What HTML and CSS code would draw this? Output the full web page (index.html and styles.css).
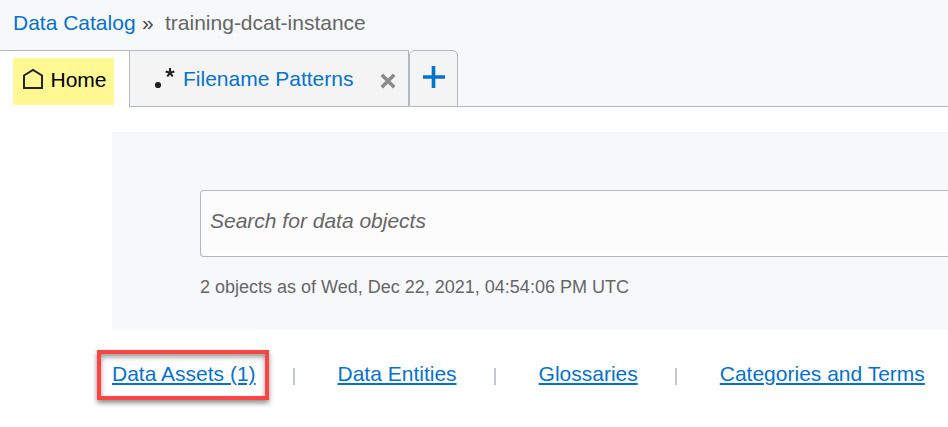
FILE: index.html
```html
<!DOCTYPE html>
<html lang="en">
<head>
<meta charset="utf-8">
<title>Data Catalog</title>
<link rel="stylesheet" href="styles.css">
</head>
<body>
<header class="crumbs">
  <a class="crumb-link" href="#">Data Catalog</a>
  <span class="crumb-sep">»</span>
  <span class="crumb-current">training-dcat-instance</span>
</header>
<nav class="tabs">
  <div class="tab-home">
    <div class="home-mark">
      <svg class="home-icon" width="22" height="22" viewBox="0 0 22 22"><path d="M2 7.5 L11 2 L20 7.5 V20 H2 Z" fill="none" stroke="#222" stroke-width="2"/></svg>
      <span>Home</span>
    </div>
  </div>
  <div class="tab-patterns">
    <svg class="pattern-icon" width="22" height="24" viewBox="0 0 22 24"><circle cx="4" cy="19" r="3.1" fill="#222"/><path d="M16 2 V6.8 M16 6.8 L11.7 5.4 M16 6.8 L20.3 5.4 M16 6.8 L13.3 10.5 M16 6.8 L18.7 10.5" fill="none" stroke="#222" stroke-width="2.1"/></svg>
    <a class="tab-label" href="#">Filename Patterns</a>
    <svg class="close-icon" width="16" height="16" viewBox="0 0 16 16"><path d="M1.8 1.8 L14.2 14.2 M14.2 1.8 L1.8 14.2" stroke="#8b8b8b" stroke-width="3.6"/></svg>
  </div>
  <div class="tab-add">
    <svg width="22" height="22" viewBox="0 0 22 22"><path d="M10.5 0 V22 M0 11 H22" stroke="#0572ce" stroke-width="3.6"/></svg>
  </div>
  <div class="tab-rest"></div>
</nav>
<main>
  <section class="search-panel">
    <div class="search-box"><div class="search-text">Search for data objects</div></div>
    <p class="summary">2 objects as of Wed, Dec 22, 2021, 04:54:06 PM UTC</p>
  </section>
  <nav class="links">
    <div class="callout"><a class="link assets" href="#">Data Assets (1)</a></div>
    <span class="divider"></span>
    <a class="link entities" href="#">Data Entities</a>
    <span class="divider"></span>
    <a class="link glossaries" href="#">Glossaries</a>
    <span class="divider"></span>
    <a class="link terms" href="#">Categories and Terms</a>
  </nav>
</main>
</body>
</html>
```
FILE: styles.css
```css
* { box-sizing: border-box; }
body {
  margin: 0;
  width: 948px;
  height: 427px;
  overflow: hidden;
  background: #fff;
  font: 21px/24px "Liberation Sans", Arial, sans-serif;
  color: #666;
}
a { color: #0572ce; text-decoration: none; }
.crumbs {
  display: flex;
  height: 50px;
  padding: 11px 0 0 13px;
  background: #f6f8fa;
  white-space: nowrap;
}
.crumb-link { width: 129px; }
.crumb-sep { width: 23px; color: #444; }
.tabs { display: flex; height: 57px; }
.tab-home {
  width: 129px;
  padding: 7px 0 0 13px;
  border-top: 1px solid #b0b8c2;
}
.home-mark {
  display: flex;
  align-items: center;
  width: 101px;
  height: 47px;
  padding-left: 9px;
  gap: 6.5px;
  background: #fff893;
  color: #000;
}
.home-icon { margin-top: -5px; }
.home-mark span { margin-top: -3px; }
.tab-patterns {
  display: flex;
  width: 280px;
  padding: 15px 0 0 24px;
  border: 1px solid #b0b8c2;
  background: #f4f4f4;
  white-space: nowrap;
}
.tab-label { width: 197px; margin: 1px 0 0 7px; }
.close-icon { margin-top: 7px; }
.tab-add {
  width: 49px;
  padding: 15px 0 0 13px;
  border: 1px solid #b0b8c2;
  border-radius: 5px 5px 0 0;
  background: #f4f4f4;
}
.tab-add svg { display: block; }
.tab-rest { flex: 1; background: #f6f8fa; border-bottom: 1px solid #b0b8c2; }
.search-panel {
  height: 198px;
  margin: 25px 0 0 112px;
  padding: 58px 0 0 88px;
  background: #f6f8fa;
}
.search-box {
  height: 67px;
  padding-bottom: 5px;
  border: 1px solid #b0b8c2;
  border-right: 0;
  border-radius: 4px 0 0 4px;
  background: #fff;
}
.search-text {
  height: 60px;
  padding: 18px 0 0 9px;
  border-radius: 4px 0 0 0;
  background: #fcfcfc;
  font-style: italic;
}
.summary { margin: 18px 0 0; font-size: 18px; }
.links {
  display: flex;
  padding: 20px 0 0 97px;
  white-space: nowrap;
}
.callout {
  width: 172px;
  height: 50px;
  padding: 8px 0 0 11px;
  border: 4px solid #fc4444;
  box-shadow: 0 3px 5px rgba(0,0,0,.45), inset 0 3px 5px rgba(0,0,0,.4);
}
.link {
  text-decoration: underline;
  text-decoration-thickness: 2px;
  text-underline-offset: 2px;
}
.entities, .glossaries, .terms { margin-top: 12px; }
.divider {
  width: 2px;
  height: 17px;
  margin: 18px 42.5px 0 24px;
  background: #c3c8ce;
}
.entities + .divider, .glossaries + .divider { margin-left: 37.5px; }
```
